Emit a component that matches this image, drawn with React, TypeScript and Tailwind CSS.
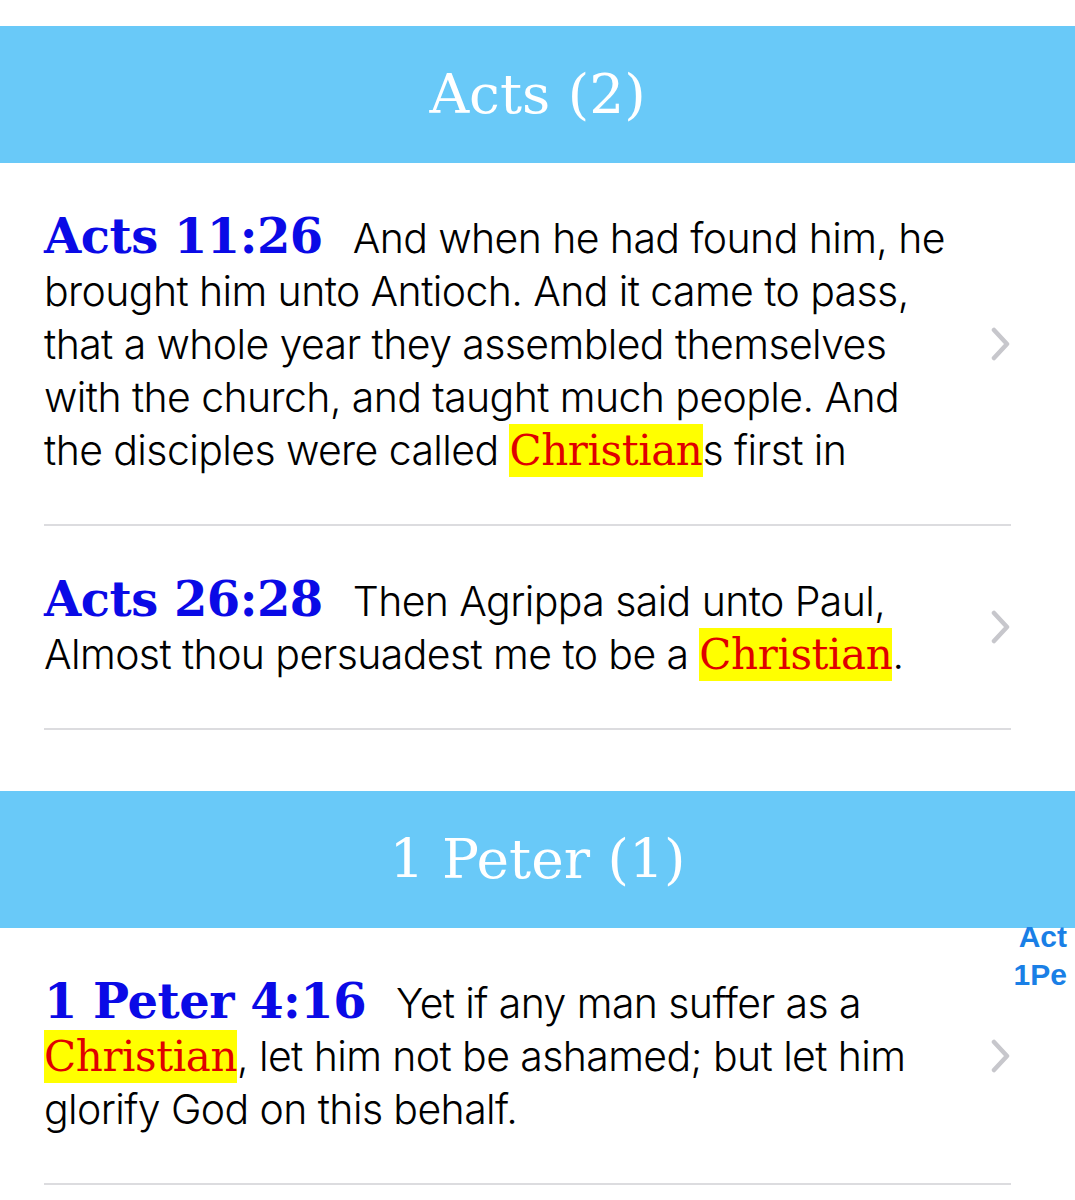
import React from "react";

const typewriter = { fontFamily: '"DejaVu Serif", "Liberation Serif", serif' };

type Part = { text: string; hit?: boolean };

type Verse = { ref: string; parts: Part[] };

type Section = { title: string; verses: Verse[] };

const sections: Section[] = [
  {
    title: "Acts (2)",
    verses: [
      {
        ref: "Acts 11:26",
        parts: [
          {
            text: "And when he had found him, he brought him unto Antioch. And it came to pass, that a whole year they assembled themselves with the church, and taught much people. And the disciples were called ",
          },
          { text: "Christian", hit: true },
          { text: "s first in" },
        ],
      },
      {
        ref: "Acts 26:28",
        parts: [
          { text: "Then Agrippa said unto Paul, Almost thou persuadest me to be a " },
          { text: "Christian", hit: true },
          { text: "." },
        ],
      },
    ],
  },
  {
    title: "1 Peter (1)",
    verses: [
      {
        ref: "1 Peter 4:16",
        parts: [
          { text: "Yet if any man suffer as a " },
          { text: "Christian", hit: true },
          { text: ", let him not be ashamed; but let him glorify God on this behalf." },
        ],
      },
    ],
  },
];

function Chevron() {
  return (
    <svg width="22" height="34" viewBox="0 0 22 34" className="shrink-0">
      <path d="M5 3 L18 17 L5 31" fill="none" stroke="#c7c7cc" strokeWidth="4.5" strokeLinecap="round" strokeLinejoin="round" />
    </svg>
  );
}

function VerseRow({ verse }: { verse: Verse }) {
  return (
    <div className="ml-[44px] w-[967px] border-b-2 border-[#dcdcdf] py-[47px] flex items-center">
      <p
        className="flex-1 pr-[36px] text-[41px] leading-[53px] font-light text-black tracking-[-0.6px]"
        style={{ fontFamily: '"Inter", "Roboto", "Liberation Sans", sans-serif' }}
      >
        <span className="text-[48px] font-bold text-[#0a0ae6] mr-[30px] tracking-[-0.5px]" style={typewriter}>
          {verse.ref}
        </span>
        {verse.parts.map((p, i) =>
          p.hit ? (
            <span
              key={i}
              className="inline-block bg-[#ffff00] text-[#e00000] text-[42px] leading-[53px] tracking-[-0.4px]"
              style={typewriter}
            >
              {p.text}
            </span>
          ) : (
            <span key={i}>{p.text}</span>
          ),
        )}
      </p>
      <Chevron />
    </div>
  );
}

export default function App() {
  return (
    <div className="relative w-[1075px] h-[1200px] overflow-hidden bg-white">
      <div className="h-[26px]" />
      {sections.map((s, i) => (
        <div key={s.title} className={i > 0 ? "mt-[61px]" : ""}>
          <div
            className="h-[137px] bg-[#69c9f8] flex items-center justify-center text-white text-[55px]"
            style={typewriter}
          >
            {s.title}
          </div>
          {s.verses.map((v) => (
            <VerseRow key={v.ref} verse={v} />
          ))}
        </div>
      ))}
      <div
        className="absolute right-[8px] top-[918px] flex flex-col items-end text-[30px] leading-[38px] font-bold text-[#1a7fe6]"
        style={{ fontFamily: '"Liberation Sans", sans-serif' }}
      >
        <span>Act</span>
        <span>1Pe</span>
      </div>
    </div>
  );
}
